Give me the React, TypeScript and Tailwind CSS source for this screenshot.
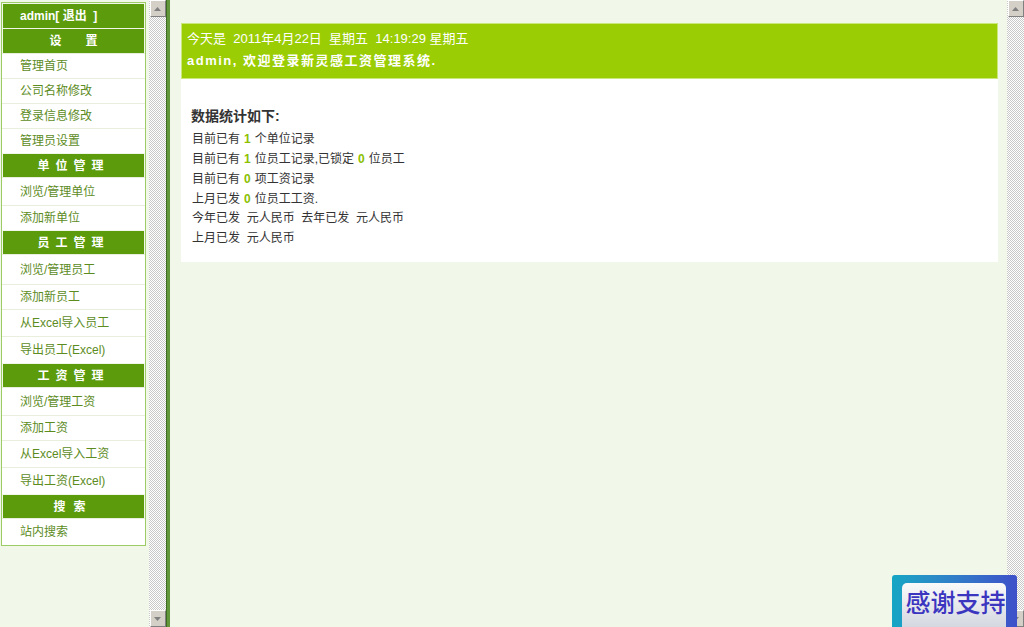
import React from "react";

const FONT = "font-['Liberation_Sans','Noto_Sans_CJK_SC',sans-serif]";

type Row = { kind: "head" | "item"; label: string; h: number; spaced?: string; left?: boolean };

const rows: Row[] = [
  { kind: "head", label: "admin[ 退出  ]", h: 25, left: true },
  { kind: "head", label: "设　　置", h: 25 },
  { kind: "item", label: "管理首页", h: 25 },
  { kind: "item", label: "公司名称修改", h: 25 },
  { kind: "item", label: "登录信息修改", h: 25 },
  { kind: "item", label: "管理员设置", h: 25 },
  { kind: "head", label: "单位管理", h: 24, spaced: "tracking-[6px]" },
  { kind: "item", label: "浏览/管理单位", h: 28 },
  { kind: "item", label: "添加新单位", h: 25 },
  { kind: "head", label: "员工管理", h: 24, spaced: "tracking-[6px]" },
  { kind: "item", label: "浏览/管理员工", h: 30 },
  { kind: "item", label: "添加新员工", h: 25 },
  { kind: "item", label: "从Excel导入员工", h: 27 },
  { kind: "item", label: "导出员工(Excel)", h: 27 },
  { kind: "head", label: "工资管理", h: 24, spaced: "tracking-[6px]" },
  { kind: "item", label: "浏览/管理工资", h: 28 },
  { kind: "item", label: "添加工资", h: 25 },
  { kind: "item", label: "从Excel导入工资", h: 27 },
  { kind: "item", label: "导出工资(Excel)", h: 27 },
  { kind: "head", label: "搜索", h: 24, spaced: "tracking-[8px]" },
  { kind: "item", label: "站内搜索", h: 27 },
];

function ArrowButton({ down = false }: { down?: boolean }) {
  return (
    <div className="w-[16px] h-[17px] bg-[#d4d0c8] border border-t-white border-l-white border-r-[#808080] border-b-[#808080] flex items-center justify-center shrink-0">
      <svg width="7" height="4" viewBox="0 0 7 4">
        {down ? <polygon points="0,0 7,0 3.5,4" fill="#808080" /> : <polygon points="0,4 7,4 3.5,0" fill="#808080" />}
      </svg>
    </div>
  );
}

function Scrollbar() {
  return (
    <div className="w-[17px] h-full flex flex-col items-center bg-[repeating-conic-gradient(#c8c8c8_0_25%,#ffffff_0_50%)] bg-[length:2px_2px]">
      <ArrowButton />
      <div className="flex-1" />
      <ArrowButton down />
    </div>
  );
}

function Sidebar() {
  return (
    <div className="w-[149px] h-full bg-[#f1f7e9] pl-[1px] pr-[3px] pt-[2px]">
      <div className="border border-[#9ccc66] bg-white">
        {rows.map((r, i) =>
          r.kind === "head" ? (
            <div
              key={i}
              style={{ height: r.h }}
              className={`bg-[#5c9c0c] border-[1px] border-[#f1f7e9] border-b-0 flex items-center text-white text-[12px] font-bold whitespace-pre ${
                r.left ? "pl-[17px]" : "justify-center"
              } ${r.spaced ?? ""}`}
            >
              {r.label}
            </div>
          ) : (
            <div
              key={i}
              style={{ height: r.h }}
              className="border-t border-[#e8f0dd] flex items-center pl-[18px] text-[12px] text-[#5d8c1e]"
            >
              {r.label}
            </div>
          )
        )}
      </div>
    </div>
  );
}

function Num({ n }: { n: string }) {
  return <span className="text-[#8cc000] font-bold mx-[4px]">{n}</span>;
}

export default function App() {
  return (
    <div className={`relative w-[1024px] h-[627px] flex overflow-hidden bg-[#f1f7e9] ${FONT}`}>
      <Sidebar />
      <Scrollbar />
      <div className="w-[4px] h-full border-l border-[#3f6a22] bg-[#62963a]" />
      <div className="flex-1 h-full pt-[23px] pl-[11px] pr-[9px] bg-[#f1f7e9]">
        <div className="h-[56px] bg-[#9acd03] border border-[#c9e77a] pl-[5px] pt-[6px] text-white">
          <div className="text-[13px] leading-[18px]">今天是 &nbsp;2011年4月22日 &nbsp;星期五 &nbsp;14:19:29 星期五</div>
          <div className="text-[13px] leading-[18px] font-bold mt-[4px] tracking-[1.5px]">admin, 欢迎登录新灵感工资管理系统.</div>
        </div>
        <div className="h-[183px] bg-white pl-[10px] pt-[27px] text-[#333333]">
          <div className="text-[14px] font-bold leading-[20px]">数据统计如下:</div>
          <div className="text-[12px] leading-[20px] pl-[1px] mt-[3px]">
            <div>目前已有<Num n="1" />个单位记录</div>
            <div>目前已有<Num n="1" />位员工记录,已锁定<Num n="0" />位员工</div>
            <div>目前已有<Num n="0" />项工资记录</div>
            <div className="leading-[19px] pt-[1px]">上月已发<Num n="0" />位员工工资.</div>
            <div className="leading-[19px]">今年已发 &nbsp;元人民币 &nbsp;去年已发 &nbsp;元人民币</div>
            <div>上月已发 &nbsp;元人民币</div>
          </div>
        </div>
      </div>
      <Scrollbar />
      <div className="absolute left-[892px] top-[575px] w-[125px] h-[60px] rounded-[3px] bg-gradient-to-r from-[#14a6c4] to-[#3d4fc9] pt-[8px] pl-[10px]">
        <div className="w-[104px] h-[50px] rounded-[5px] bg-gradient-to-b from-[#fafafa] to-[#cfd3dc] flex items-start justify-center pt-[2px] pl-[3px]">
          <span className="text-[25px] font-medium leading-[32px] text-[#3b35c0] font-['Noto_Sans_CJK_SC',sans-serif]">感谢支持</span>
        </div>
      </div>
    </div>
  );
}
